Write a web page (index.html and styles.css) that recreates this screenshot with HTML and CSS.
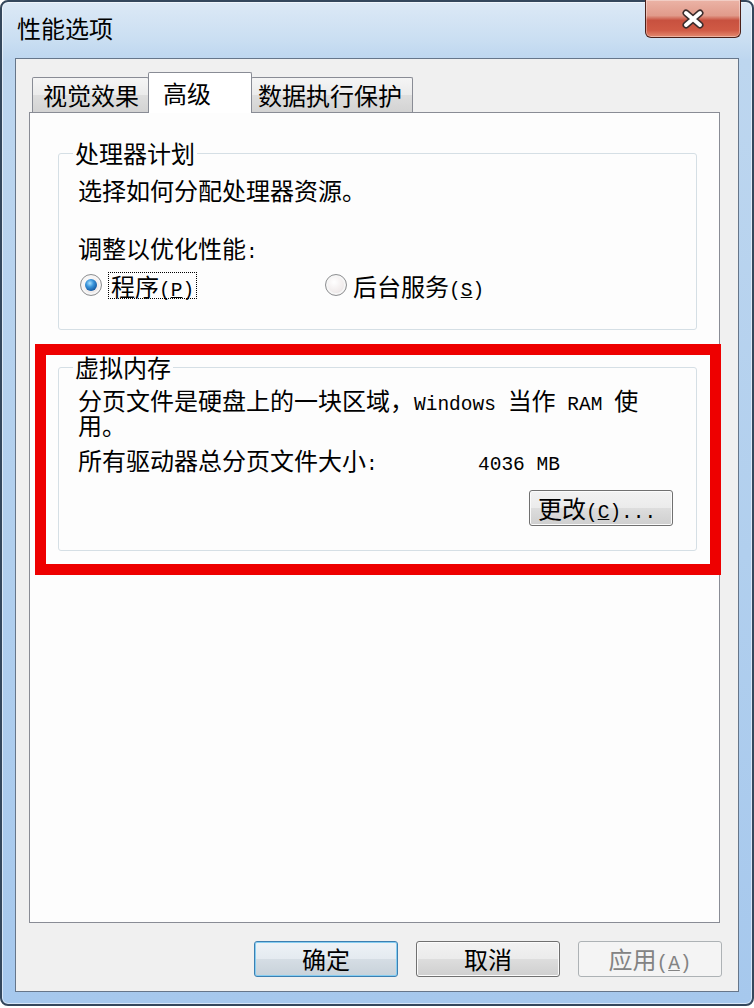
FILE: index.html
```html
<!DOCTYPE html>
<html lang="zh-CN">
<head>
    <meta charset="UTF-8">
    <meta name="viewport" content="width=device-width, initial-scale=1.0">
    <title>性能选项</title>
    <link rel="stylesheet" href="styles.css">
</head>
<body>
    <div class="window">
        <!-- Title bar -->
        <div class="titlebar">
            <span class="title">性能选项</span>
            <button class="close-btn" aria-label="关闭">
                <svg width="26" height="20" viewBox="0 0 26 20">
                    <path d="M6 4 L20 16 M20 4 L6 16" stroke="#3b2d2d" stroke-width="7" stroke-linecap="round"/>
                    <path d="M6 4 L20 16 M20 4 L6 16" stroke="#ffffff" stroke-width="4" stroke-linecap="round"/>
                </svg>
            </button>
        </div>

        <div class="client">
            <!-- Tabs -->
            <div class="tabs">
                <div class="tab tab-visual">视觉效果</div>
                <div class="tab tab-advanced active">高级</div>
                <div class="tab tab-dep">数据执行保护</div>
            </div>

            <div class="tab-panel">
                <fieldset class="group cpu">
                    <legend>处理器计划</legend>
                    <p class="desc">选择如何分配处理器资源。</p>
                    <p class="adjust">调整以优化性能<span class="en">:</span></p>
                    <div class="radio-row">
                        <label class="radio-opt">
                            <span class="radio checked"></span>
                            <span class="focus">程序<span class="en">(<u>P</u>)</span></span>
                        </label>
                        <label class="radio-opt">
                            <span class="radio"></span>
                            <span class="radio-text">后台服务<span class="en">(<u>S</u>)</span></span>
                        </label>
                    </div>
                </fieldset>

                <div class="mark">
                    <fieldset class="group vm">
                        <legend>虚拟内存</legend>
                        <p class="vm-desc">分页文件是硬盘上的一块区域，<span class="en">Windows </span>当作<span class="en"> RAM </span>使用。</p>
                        <div class="vm-size">
                            <span class="vm-label">所有驱动器总分页文件大小<span class="en">:</span></span>
                            <span class="en vm-value">4036 MB</span>
                        </div>
                        <div class="vm-actions">
                            <button class="btn change-btn">更改<span class="en">(<u>C</u>)...</span></button>
                        </div>
                    </fieldset>
                </div>
            </div>

            <!-- Dialog buttons -->
            <div class="footer">
                <button class="btn default">确定</button>
                <button class="btn">取消</button>
                <button class="btn" disabled>应用<span class="en">(<u>A</u>)</span></button>
            </div>
        </div>
    </div>
</body>
</html>
```

FILE: styles.css
```css
* {
    box-sizing: border-box;
}
body {
    margin: 0;
    background: #fff;
    font-family: "Noto Sans CJK SC", sans-serif;
    font-size: 24px;
    color: #000;
    overflow: hidden;
}
.en {
    font-family: "Liberation Mono", monospace;
    font-size: 19.5px;
    line-height: 0;
}
.window {
    width: 754px;
    height: 1006px;
    border: 2px solid #34475c;
    border-radius: 8px;
    padding: 0 13px 12px 13px;
    background: linear-gradient(180deg, #dce9f6 0%, #cbdff2 36px, #bdd6ef 58px, #b1cfee 55%, #a6c8ed 100%);
    box-shadow: inset 0 0 0 1px rgba(255, 255, 255, 0.55);
    display: flex;
    flex-direction: column;
}
.titlebar {
    height: 56px;
    margin: 0 -2px 0 -13px;
    display: flex;
    justify-content: space-between;
    align-items: flex-start;
}
.title {
    padding-left: 15px;
    margin-top: 11px;
    line-height: 30px;
}
.close-btn {
    width: 96px;
    height: 38px;
    margin-top: -2px;
    padding: 0;
    border: 1px solid #4b2019;
    border-top: none;
    border-radius: 0 0 6px 6px;
    background: linear-gradient(180deg, #ebb3a6 0%, #e19b8b 42%, #c8513f 55%, #d05a45 82%, #e48a70 100%);
    box-shadow: inset 0 0 0 1px rgba(255, 255, 255, 0.35);
    display: flex;
    align-items: center;
    justify-content: center;
}
.client {
    flex: 1;
    border: 1px solid #66768a;
    background: #f0f0f0;
    display: flex;
    flex-direction: column;
}
.tabs {
    display: flex;
    align-items: flex-end;
    padding: 13px 0 0 16px;
}
.tab {
    height: 35px;
    line-height: 33px;
    border: 1px solid #898c95;
    border-bottom: none;
    border-radius: 2px 2px 0 0;
    background: linear-gradient(180deg, #f5f5f5 0%, #ebebeb 50%, #dedede 51%, #d3d3d3 100%);
    white-space: nowrap;
}
.tab-visual {
    width: 117px;
    padding-left: 10px;
}
.tab-advanced {
    width: 104px;
    margin-left: -1px;
    padding-left: 14px;
}
.tab-dep {
    width: 162px;
    margin-left: -1px;
    padding-left: 6px;
}
.tab.active {
    height: 41px;
    line-height: 39px;
    margin-bottom: -1px;
    background: #fff;
    position: relative;
    z-index: 1;
}
.tab-panel {
    flex: 1;
    margin: 0 18px 0 13px;
    border: 1px solid #898c95;
    background: #fdfdfd;
}
.group {
    min-width: 0;
    border: 1px solid #d5dfe5;
    border-radius: 3px;
}
.group legend {
    line-height: 24px;
    padding: 0 2px;
    margin-left: -5px;
}
.group p {
    margin: 0;
}
.cpu {
    margin: 28px 22px 0 28px;
    padding: 10px 23px 29px 19px;
}
.desc, .adjust {
    line-height: 30px;
}
.adjust {
    margin-top: 28px !important;
}
.radio-row {
    margin-top: 7px;
    height: 30px;
    padding-left: 2px;
    display: grid;
    grid-template-columns: 245px auto;
    align-items: center;
}
.radio-opt {
    display: flex;
    align-items: center;
    gap: 6px;
}
.radio {
    width: 22px;
    height: 22px;
    border-radius: 50%;
    border: 1px solid #8d8f91;
    background: radial-gradient(circle at 40% 35%, #ffffff 0%, #f1ecec 55%, #d9d2d3 100%);
    box-shadow: inset 0 0 0 2px #f6f6f6;
    display: flex;
    align-items: center;
    justify-content: center;
}
.radio.checked::after {
    content: "";
    width: 12px;
    height: 12px;
    border-radius: 50%;
    background: radial-gradient(circle at 40% 35%, #a8e0ff 0%, #3a95db 35%, #105199 80%, #0b3c74 100%);
}
.focus {
    border: 1px dotted #000;
    padding: 0 2px;
    line-height: 25px;
}
.radio-text {
    line-height: 27px;
}
.mark {
    margin: 14px -2px 0 5px;
    border: 11px solid #ee0000;
    padding: 0 13px 13px 12px;
}
.vm {
    margin: 0;
    padding: 8px 23px 24px 19px;
}
.vm-desc {
    line-height: 25px;
    max-width: 575px;
}
.vm-size {
    margin-top: 10px;
    line-height: 25px;
    display: flex;
    align-items: baseline;
}
.vm-label {
    width: 400px;
}
.vm-value {
    line-height: 25px;
}
.vm-actions {
    margin-top: 12px;
    display: flex;
    justify-content: flex-end;
}
.btn {
    width: 144px;
    height: 36px;
    padding: 0;
    border: 1px solid #707070;
    border-radius: 3px;
    background: linear-gradient(180deg, #f2f2f2 0%, #ebebeb 50%, #dddddd 51%, #cfcfcf 100%);
    box-shadow: inset 0 0 0 1px #fbfbfb;
    font-family: "Noto Sans CJK SC", sans-serif;
    font-size: 24px;
    line-height: 34px;
    color: #000;
}
.change-btn {
    text-align: left;
    padding-left: 8px;
}
.footer {
    display: flex;
    justify-content: flex-end;
    gap: 18px;
    padding: 18px 16px 14px 0;
}
.btn.default {
    border-color: #3c7fb1;
    box-shadow: inset 0 0 0 1px #86cdf1;
    background: linear-gradient(180deg, #eef3f7 0%, #e4eaf0 50%, #d5dde4 51%, #c8d2da 100%);
}
.btn:disabled {
    border-color: #adb2b5;
    background: #f4f4f4;
    box-shadow: none;
    color: #838383;
}
```
